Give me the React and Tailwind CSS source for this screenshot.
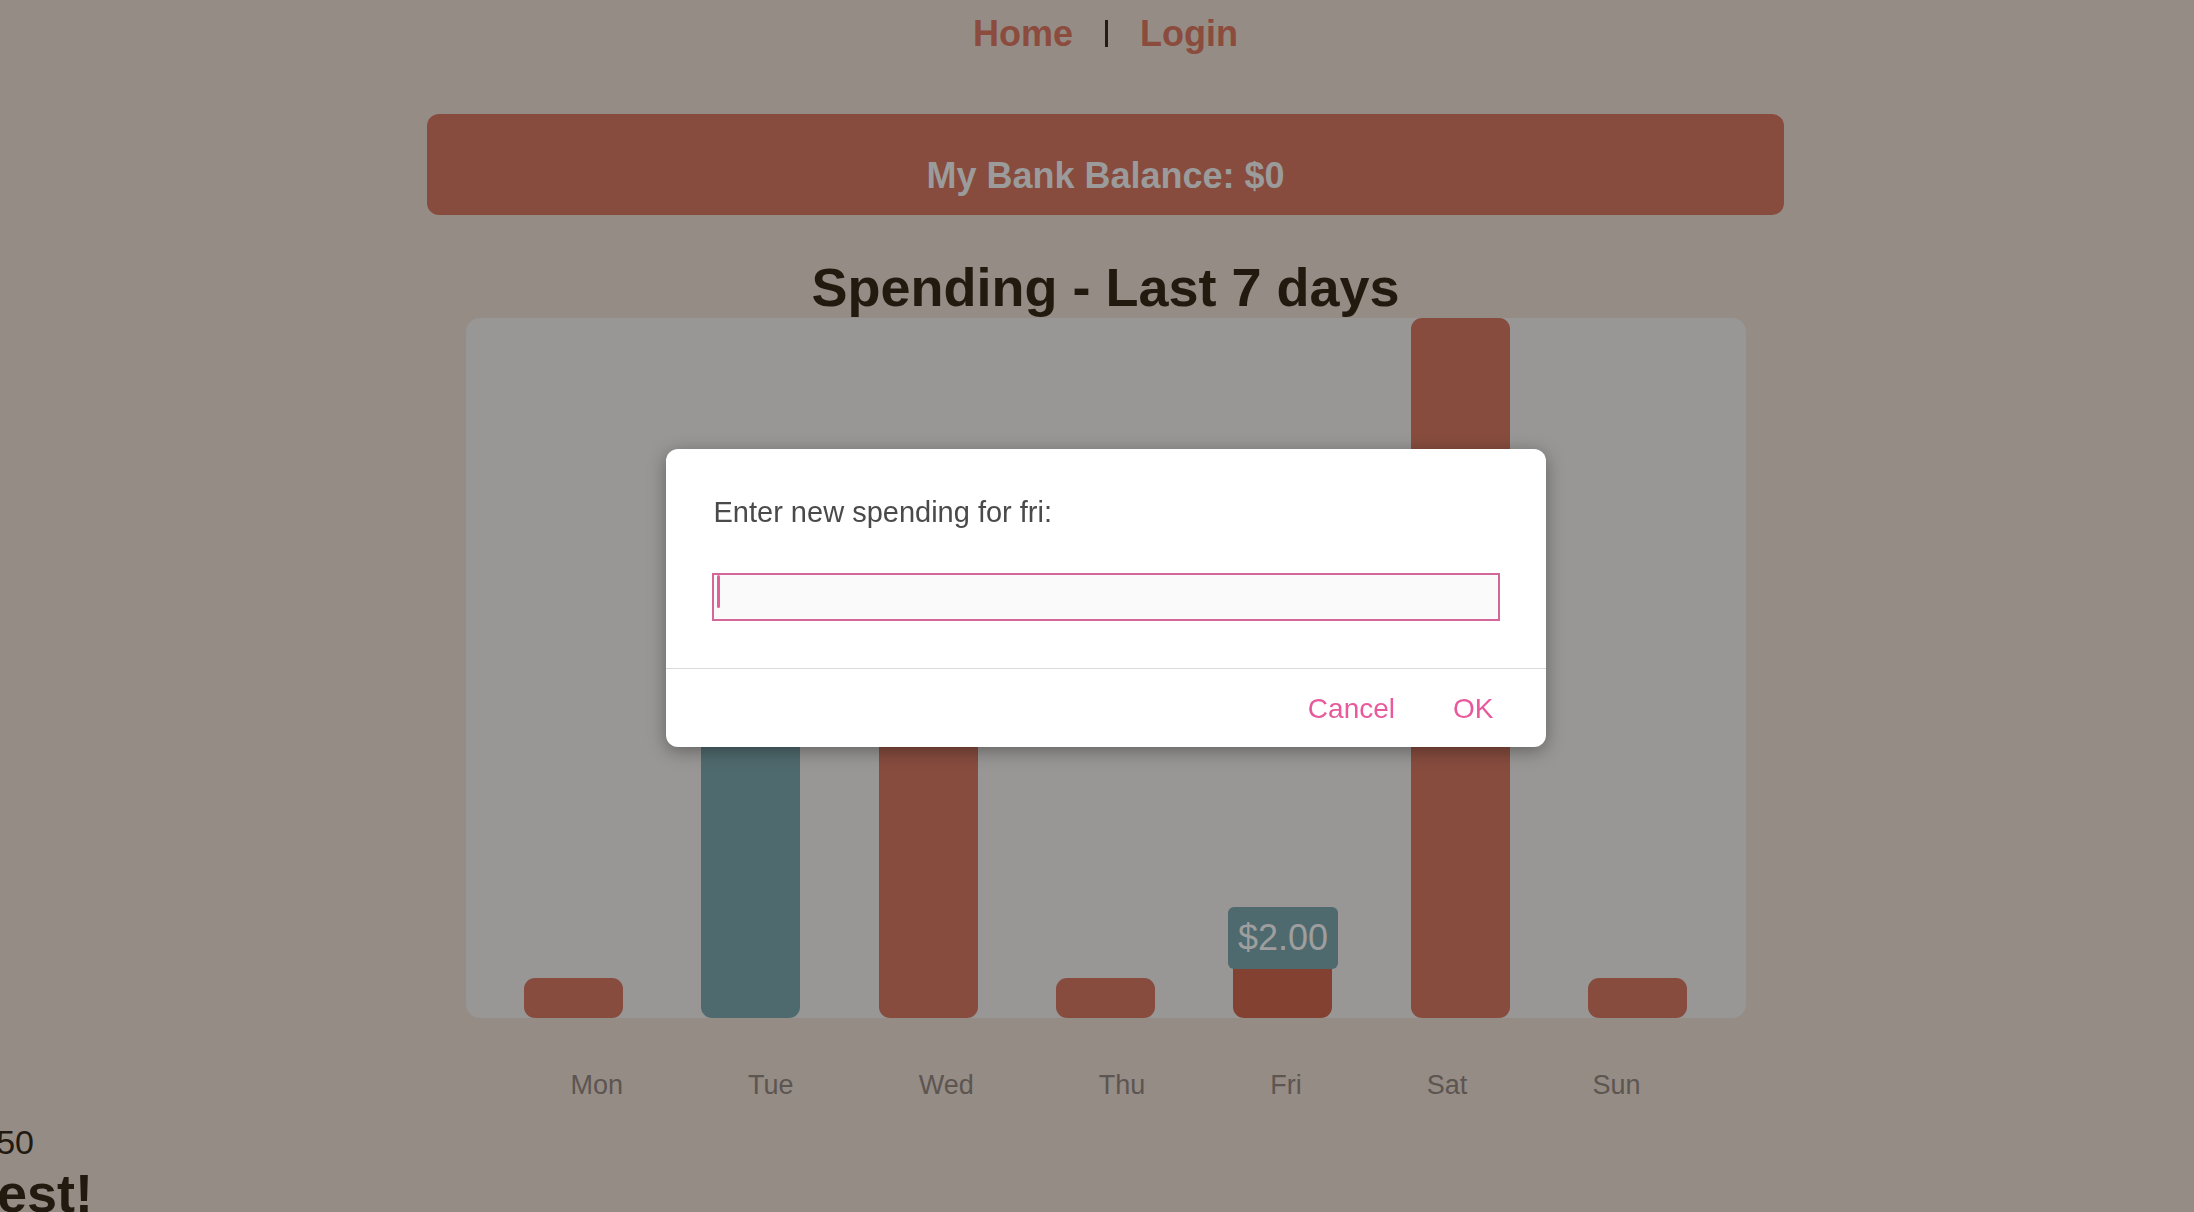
import React from "react";

const days = [
  { label: "Mon", height: 40, color: "bg-[#874c3e]" },
  { label: "Tue", height: 498, color: "bg-[#4f6a6e]" },
  { label: "Wed", height: 418, color: "bg-[#874c3e]" },
  { label: "Thu", height: 40, color: "bg-[#874c3e]" },
  { label: "Fri", height: 60, color: "bg-[#834132]", tip: "$2.00" },
  { label: "Sat", height: 700, color: "bg-[#874c3e]" },
  { label: "Sun", height: 40, color: "bg-[#874c3e]" },
];

export default function App() {
  return (
    <div className="min-h-screen overflow-hidden bg-[#958c86] font-['Liberation_Sans',Arial,sans-serif]">
      <div className="flex flex-col items-center pl-[17px]">
        {/* nav */}
        <nav className="flex items-center gap-[32px] pt-[13px] text-[36px] font-bold leading-[41px]">
          <a className="text-[#8b4b3d]">Home</a>
          <div className="w-[3px] h-[27px] bg-[#241b14]" />
          <a className="text-[#8b4b3d]">Login</a>
        </nav>

        {/* balance */}
        <div className="mt-[60px] w-[1357px] rounded-[12px] bg-[#874c3e] pt-[41px] pb-[19px] text-center text-[36px] font-bold leading-[41px] text-[#9b9b9b]">
          My Bank Balance: $0
        </div>

        <h1 className="mt-[41px] text-[54px] font-bold leading-[62px] text-[#22190f]">
          Spending - Last 7 days
        </h1>

        {/* chart */}
        <div className="grid h-[700px] w-[1280px] grid-cols-7 rounded-[14px] bg-[#989795] px-[19px]">
          {days.map((d) => (
            <div key={d.label} className="relative flex h-full items-end justify-center">
              <div className={`w-[99px] rounded-[11px] ${d.color}`} style={{ height: d.height }} />
              {d.tip && (
                <div className="absolute bottom-[49px] left-1/2 flex h-[62px] w-[110px] -translate-x-1/2 items-center justify-center rounded-[6px] bg-[#4f6a6e] text-[36px] text-[#9e9e9e]">
                  {d.tip}
                </div>
              )}
            </div>
          ))}
        </div>

        <div className="mt-[52px] flex w-[1070px] justify-between text-[27px] leading-[31px] text-[#5c5550]">
          {days.map((d) => (
            <span key={d.label}>{d.label}</span>
          ))}
        </div>
      </div>

      {/* cut-off content on the left */}
      <div className="mt-[22px] flex w-[34px] flex-col items-end whitespace-nowrap text-[34px] leading-[39px] text-[#22190f]">
        <span>Total: $12.50</span>
      </div>
      <div className="flex w-[93px] flex-col items-end whitespace-nowrap text-[54px] font-bold leading-[62px] text-[#22190f]">
        <span>You're the best!</span>
      </div>

      {/* prompt dialog */}
      <div className="fixed inset-0 flex items-start justify-center pl-[17px] pt-[449px]">
        <div className="w-[880px] rounded-[12px] bg-white shadow-[0_4px_18px_rgba(0,0,0,0.35)]">
          <div className="px-[46px] pt-[47px] pb-[47px]">
            <p className="pl-[2px] text-[29px] leading-[32px] text-[#4a4a4a]">Enter new spending for fri:</p>
            <div className="mt-[45px] flex h-[48px] items-start border-2 border-[#d4679a] bg-[#fafafa] pl-[3px]">
              <div className="h-[33px] w-[3px] rounded-full bg-[#e0609a]" />
            </div>
          </div>
          <div className="h-px bg-[#d9d9d9]" />
          <div className="flex justify-end gap-[58px] pr-[52px] pt-[24px] pb-[22px] text-[28px] leading-[32px] text-[#e85a9c]">
            <button>Cancel</button>
            <button>OK</button>
          </div>
        </div>
      </div>
    </div>
  );
}
